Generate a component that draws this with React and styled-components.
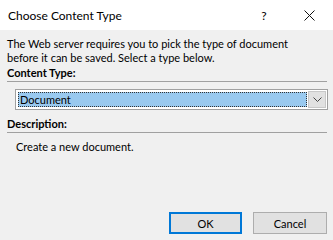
import React from "react";
import styled, { createGlobalStyle } from "styled-components";

const Global = createGlobalStyle`
  html, body {
    margin: 0;
    padding: 0;
    background: #f0f0f0;
  }
  * {
    box-sizing: border-box;
  }
`;

function App() {
  return (
    <Dialog>
      <Global />
      <TitleBar>
        <Title>Choose Content Type</Title>
        <Help>?</Help>
        <Close>
          <svg width="11" height="11" viewBox="0 0 11 11">
            <path d="M0.5 0.5 L10.5 10.5 M10.5 0.5 L0.5 10.5" stroke="#111" strokeWidth="1" fill="none" />
          </svg>
        </Close>
      </TitleBar>
      <Body>
        <Intro>
          The Web server requires you to pick the type of document before it can be saved. Select a type below.
        </Intro>
        <Heading>Content Type:</Heading>
        <Select>
          <Selected>
            <SelectedText>Document</SelectedText>
          </Selected>
          <DropButton>
            <svg width="9" height="5" viewBox="0 0 9 5">
              <path d="M0.5 0.5 L4.5 4.5 L8.5 0.5" stroke="#444" strokeWidth="1" fill="none" />
            </svg>
          </DropButton>
        </Select>
        <Heading gap={7}>Description:</Heading>
        <Description>Create a new document.</Description>
        <Footer>
          <Button primary>OK</Button>
          <Button>Cancel</Button>
        </Footer>
      </Body>
    </Dialog>
  );
}

const Dialog = styled.div`
  width: 333px;
  height: 240px;
  display: flex;
  flex-direction: column;
  background: #f0f0f0;
  font-family: Lato, "Noto Sans", sans-serif;
  font-size: 11px;
  color: #000;
  overflow: hidden;
`;

const TitleBar = styled.div`
  height: 30px;
  background: #fff;
  display: flex;
  align-items: center;
  padding-left: 8px;
  flex-shrink: 0;
`;

const Title = styled.div`
  flex: 1;
  font-size: 12px;
  padding-top: 1px;
`;

const Help = styled.div`
  width: 46px;
  text-align: center;
  font-size: 12px;
  padding-top: 1px;
`;

const Close = styled.div`
  width: 46px;
  display: flex;
  justify-content: center;
  align-items: center;
  padding-right: 2px;
`;

const Body = styled.div`
  flex: 1;
  display: flex;
  flex-direction: column;
  padding: 7px 6px 6px 7px;
`;

const Intro = styled.div`
  line-height: 14px;
  max-width: 305px;
`;

const Heading = styled.div`
  font-weight: bold;
  line-height: 14px;
  margin-top: ${(p) => p.gap ?? 1}px;
  padding-bottom: 1px;
  border-bottom: 1px solid #a0a0a0;
`;

const Select = styled.div`
  margin: 7px -1px 0 8px;
  height: 21px;
  border: 1px solid #a0a0a0;
  background: #fff;
  display: flex;
  padding: 2px 1px 2px 2px;
`;

const Selected = styled.div`
  flex: 1;
  background: #99c9ef;
  border: 1px dotted #333;
  display: flex;
  align-items: center;
`;

const SelectedText = styled.span`
  padding-left: 1px;
  line-height: 13px;
`;

const DropButton = styled.div`
  width: 18px;
  margin: -1px 0 -1px 1px;
  background: #e1e1e1;
  border: 1px solid #c8c8c8;
  display: flex;
  align-items: center;
  justify-content: center;
`;

const Description = styled.div`
  margin: 7px 0 0 9px;
  line-height: 14px;
`;

const Footer = styled.div`
  margin-top: auto;
  display: flex;
  justify-content: flex-end;
  gap: 11px;
`;

const Button = styled.button`
  width: ${(p) => (p.primary ? 73 : 74)}px;
  height: 22px;
  font-family: inherit;
  font-size: 11px;
  color: #000;
  background: #e1e1e1;
  border: ${(p) => (p.primary ? "2px solid #0078d7" : "1px solid #adadad")};
  padding: 0;
`;

export default App;
